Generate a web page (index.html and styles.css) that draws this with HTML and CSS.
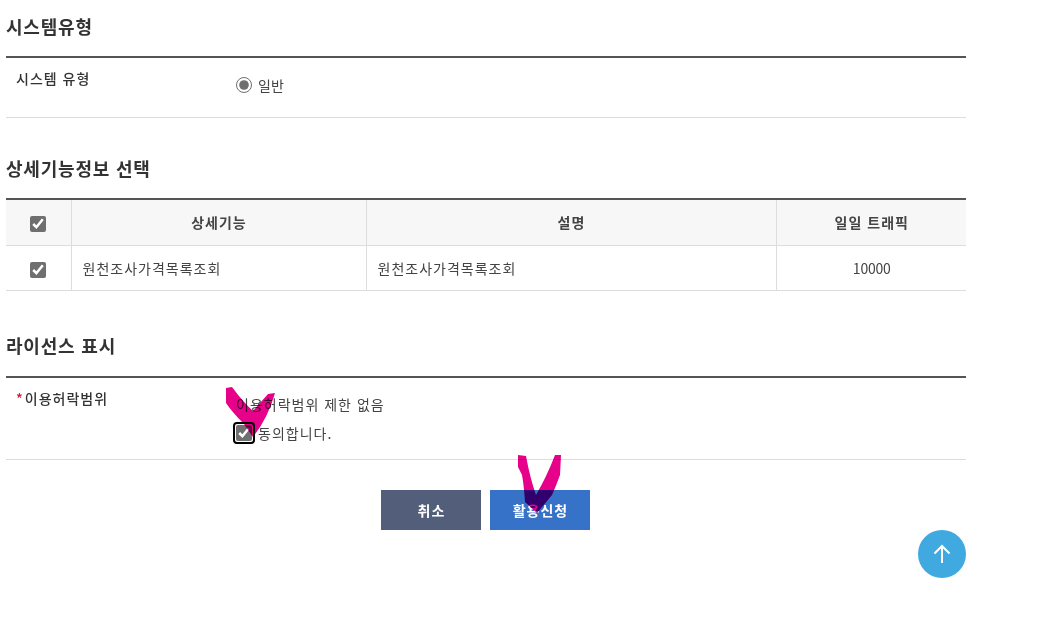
FILE: index.html
```html
<!DOCTYPE html>
<html lang="ko">

<head>
    <meta charset="utf-8">
    <meta name="viewport" content="width=device-width, initial-scale=1">
    <title>활용신청</title>
    <link rel="stylesheet" href="styles.css">
</head>

<body>
    <div class="wrap">
        <h2 class="sec-title">시스템유형</h2>
        <div class="form-row form-row-type">
            <div class="form-label">시스템 유형</div>
            <div class="form-value">
                <label class="opt opt-radio"><input type="radio" name="systype" checked>일반</label>
            </div>
        </div>

        <h2 class="sec-title sec-detail">상세기능정보 선택</h2>
        <table class="grid">
            <colgroup>
                <col class="col-check">
                <col class="col-name">
                <col class="col-desc">
                <col class="col-traffic">
            </colgroup>
            <thead>
                <tr>
                    <th><input type="checkbox" checked></th>
                    <th>상세기능</th>
                    <th>설명</th>
                    <th>일일 트래픽</th>
                </tr>
            </thead>
            <tbody>
                <tr>
                    <td class="center"><input type="checkbox" checked></td>
                    <td>원천조사가격목록조회</td>
                    <td>원천조사가격목록조회</td>
                    <td class="center num">10000</td>
                </tr>
            </tbody>
        </table>

        <h2 class="sec-title sec-license">라이선스 표시</h2>
        <div class="form-row form-row-license">
            <div class="form-label"><span class="req">*</span>이용허락범위</div>
            <div class="form-value">
                <p class="scope">이용허락범위 제한 없음</p>
                <label class="opt"><span class="focus-ring"><input type="checkbox" checked></span>동의합니다.</label>
            </div>
        </div>

        <div class="actions">
            <button type="button" class="btn btn-cancel">취소</button>
            <button type="button" class="btn btn-apply">활용신청</button>
        </div>

        <a href="#" class="to-top" aria-label="맨 위로">
            <svg width="20" height="20" viewBox="0 0 20 20" fill="none" stroke="#fff" stroke-width="2">
                <path d="M10 19V2M2.500 9.500L10 2l7.500 7.500" />
            </svg>
        </a>

        <!-- pen marks drawn over the screenshot -->
        <svg class="marks" width="1056" height="631" viewBox="0 0 1056 631">
            <path d="M226 388L232 387Q243 402 253 411L268 394L275 393Q268 418 253 437L244 424Q232 412 226 403Z" />
            <path d="M518 455L526 456Q530 478 536 495Q547 476 555 455L561 455L560 475Q556 486 552 495L537 513L525 502Q524 486 522 475L518 467Z" />
        </svg>
    </div>
</body>

</html>
```

FILE: styles.css
```css
body {
    margin: 0;
    background-color: #fff;
    color: #333;
    font-family: "Noto Sans CJK KR", "Noto Sans", sans-serif;
    font-size: 14px;
    letter-spacing: 1px;
}

.wrap {
    width: 960px;
    margin-left: 6px;
}

.sec-title {
    height: 56px;
    margin: 0;
    font-size: 18px;
    font-weight: 700;
    line-height: 52px;
    letter-spacing: 0.8px;
}

.sec-detail {
    margin-top: 24px;
}

.sec-license {
    margin-top: 29px;
    line-height: 50px;
}

.form-row {
    display: grid;
    grid-template-columns: 230px 1fr;
    border-top: 2px solid #555;
    border-bottom: 1px solid #ddd;
}

.form-row-type {
    height: 59px;
}

.form-row-license {
    height: 81px;
}

.form-label {
    padding: 10px 0 0 10px;
    font-weight: 500;
    line-height: 20px;
}

.req {
    color: #e0103a;
    margin-right: 2px;
    letter-spacing: 0;
}

.form-value {
    color: #444;
    line-height: 20px;
}

.form-row-type .form-value {
    padding-top: 17px;
}

.form-row-license .form-value {
    padding-top: 16px;
}

.scope {
    margin: 0 0 9px;
}

.opt {
    display: flex;
    align-items: center;
}

.opt-radio {
    letter-spacing: 0;
}

.opt input {
    width: 16px;
    height: 16px;
    margin: 0 6px 0 0;
}

input {
    accent-color: #6f6f6f;
}

/* keyboard focus ring round the agreement checkbox */
.focus-ring {
    display: flex;
    margin: -3px 3px -3px -3px;
    padding: 1px;
    border: 2px solid #000;
    border-radius: 4px;
}

.focus-ring input {
    margin: 0;
}

.grid {
    width: 100%;
    border-collapse: collapse;
    table-layout: fixed;
    border-top: 2px solid #555;
}

.col-check {
    width: 65px;
}

.col-name {
    width: 295px;
}

.col-desc {
    width: 410px;
}

.grid th,
.grid td {
    border-bottom: 1px solid #ddd;
    border-left: 1px solid #ddd;
    padding: 0 10px 0 11px;
}

.grid th:first-child,
.grid td:first-child {
    border-left: 0;
    padding-left: 0;
    padding-right: 1px;
}

.grid th {
    height: 43px;
    padding-bottom: 2px;
    background-color: #f7f7f7;
    font-weight: 700;
    color: #444;
    text-align: center;
}

.grid td {
    height: 44px;
    color: #444;
}

.grid input {
    width: 16px;
    height: 16px;
    margin: 0;
    vertical-align: middle;
}

.center {
    text-align: center;
}

.num {
    letter-spacing: -0.2px;
}

.actions {
    display: flex;
    justify-content: center;
    gap: 9px;
    margin-top: 30px;
    padding-right: 2px;
}

.btn {
    width: 100px;
    height: 40px;
    padding: 0 0 0 2px;
    border: 0;
    color: #fff;
    font-family: inherit;
    font-size: 14px;
    font-weight: 700;
    letter-spacing: 1px;
}

.btn-cancel {
    background-color: #535f7a;
}

.btn-apply {
    background-color: #3672c8;
}

.to-top {
    position: absolute;
    left: 918px;
    top: 530px;
    display: flex;
    align-items: center;
    justify-content: center;
    width: 48px;
    height: 48px;
    border-radius: 50%;
    background-color: #3fa9e0;
}

.marks {
    position: absolute;
    left: 0;
    top: 0;
    fill: #e6008a;
    mix-blend-mode: multiply;
    pointer-events: none;
}
```
